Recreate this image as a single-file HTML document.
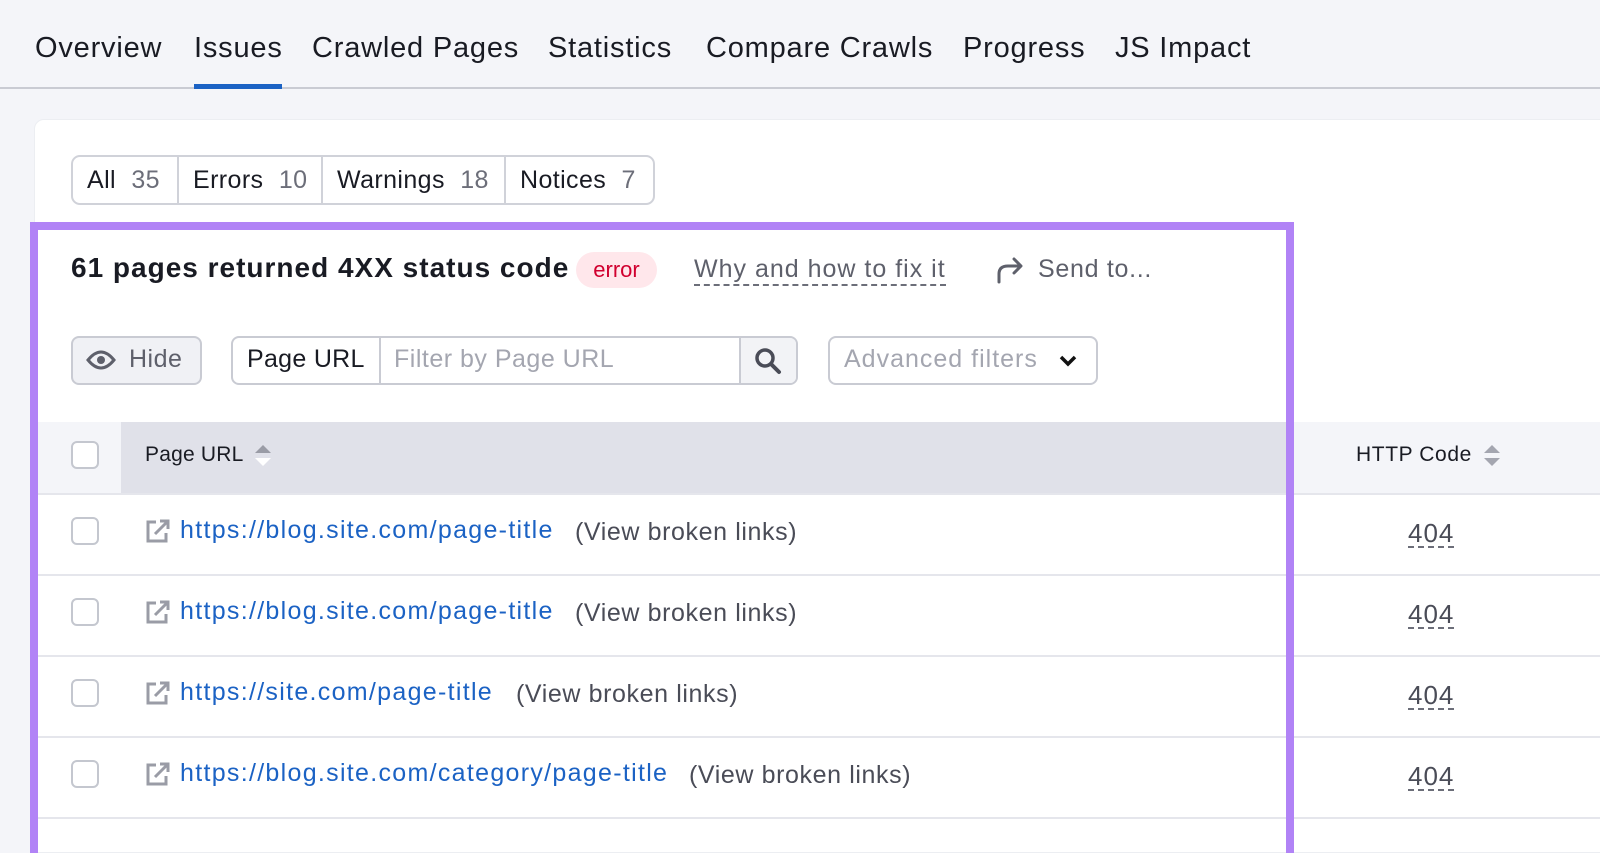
<!DOCTYPE html>
<html><head><meta charset="utf-8"><style>
*{box-sizing:border-box;margin:0;padding:0}
html,body{width:1600px;height:853px;overflow:hidden}
body{background:#f4f5f9;font-family:"Liberation Sans",Arial,sans-serif;color:#191b23;position:relative}
.a{position:absolute;white-space:nowrap}
.nav{top:32px;font-size:29px;letter-spacing:0.8px;color:#191b23}
.cb{position:absolute;left:71px;width:28px;height:28px;border:2px solid #c4c7cf;border-radius:6px;background:#fff}
.link{font-size:25px;letter-spacing:1.3px;color:#1b62c4}
.vb{font-size:25px;letter-spacing:0.6px;color:#4a4c57}
.code{font-size:26px;letter-spacing:1px;color:#4a4c57;border-bottom:2px dashed #6c6e79;line-height:26px}
.sep{position:absolute;left:38px;width:1562px;height:2px;background:#e5e6ec}
</style></head><body>
<div class="a nav" style="left:35px">Overview</div>
<div class="a nav" style="left:194px">Issues</div>
<div class="a nav" style="left:312px">Crawled Pages</div>
<div class="a nav" style="left:548px">Statistics</div>
<div class="a nav" style="left:706px">Compare Crawls</div>
<div class="a nav" style="left:963px">Progress</div>
<div class="a nav" style="left:1115px">JS Impact</div>
<div class="a" style="left:0;top:87px;width:1600px;height:2px;background:#c9cbd3"></div>
<div class="a" style="left:194px;top:84px;width:88px;height:5px;background:#1b62c4"></div>

<div class="a" style="left:34px;top:119px;width:1580px;height:734px;background:#fff;border-radius:10px 0 0 0;border:1px solid #eceef2"></div>

<div class="a" style="left:71px;top:155px;width:584px;height:50px;border:2px solid #d0d2d9;border-radius:9px;font-size:25px;letter-spacing:0.4px;line-height:46px">
 <span class="a" style="left:14px;top:0">All <span style="color:#6c6e79;margin-left:8px">35</span></span>
 <span class="a" style="left:104px;top:0;width:2px;height:46px;background:#d0d2d9"></span>
 <span class="a" style="left:120px;top:0">Errors <span style="color:#6c6e79;margin-left:8px">10</span></span>
 <span class="a" style="left:248px;top:0;width:2px;height:46px;background:#d0d2d9"></span>
 <span class="a" style="left:264px;top:0">Warnings <span style="color:#6c6e79;margin-left:8px">18</span></span>
 <span class="a" style="left:431px;top:0;width:2px;height:46px;background:#d0d2d9"></span>
 <span class="a" style="left:447px;top:0">Notices <span style="color:#6c6e79;margin-left:8px">7</span></span>
</div>

<div class="a" style="left:71px;top:252px;font-size:28px;font-weight:bold;letter-spacing:1px">61 pages returned 4XX status code</div>
<div class="a" style="left:576px;top:252px;width:81px;height:36px;border-radius:18px;background:#ffe7eb;color:#d1002f;font-size:22px;line-height:36px;text-align:center">error</div>
<div class="a" style="left:694px;top:254px;font-size:25px;letter-spacing:1px;color:#5e606b;border-bottom:2px dashed #6c6e79;line-height:30px">Why and how to fix it</div>
<svg class="a" style="left:995px;top:256px" width="30" height="28" viewBox="0 0 30 28"><path d="M4 26 V18 Q4 10 13 10 H25 M19 3 L26 10 L19 17" fill="none" stroke="#5e606b" stroke-width="3" stroke-linecap="round" stroke-linejoin="round"/></svg>
<div class="a" style="left:1038px;top:254px;font-size:25px;letter-spacing:0.7px;color:#5e606b;line-height:30px">Send to...</div>

<div class="a" style="left:71px;top:336px;width:131px;height:49px;border:2px solid #c9cbd3;border-radius:8px;background:#f0f1f5"></div>
<svg class="a" style="left:86px;top:348px" width="30" height="24" viewBox="0 0 30 24"><path d="M2 12 Q15 -4 28 12 Q15 28 2 12 Z" fill="none" stroke="#5e606b" stroke-width="3"/><circle cx="15" cy="12" r="4" fill="#5e606b"/></svg>
<div class="a" style="left:129px;top:345px;font-size:25px;letter-spacing:0.5px;color:#5e606b">Hide</div>

<div class="a" style="left:231px;top:336px;width:567px;height:49px;border:2px solid #c9cbd3;border-radius:8px;overflow:hidden">
 <div class="a" style="left:146px;top:0;width:2px;height:45px;background:#c9cbd3"></div>
 <div class="a" style="left:506px;top:0;width:61px;height:45px;background:#f2f3f6;border-left:2px solid #c9cbd3"></div>
</div>
<div class="a" style="left:247px;top:345px;font-size:25px;letter-spacing:0.3px">Page URL</div>
<div class="a" style="left:394px;top:345px;font-size:25px;letter-spacing:0.5px;color:#a4a6b0">Filter by Page URL</div>
<svg class="a" style="left:753px;top:346px" width="30" height="30" viewBox="0 0 30 30"><circle cx="12" cy="12" r="8" fill="none" stroke="#4a4c57" stroke-width="3.5"/><path d="M18 18 L26 26" stroke="#4a4c57" stroke-width="4" stroke-linecap="round"/></svg>
<div class="a" style="left:828px;top:336px;width:270px;height:49px;border:2px solid #c9cbd3;border-radius:8px"></div>
<div class="a" style="left:844px;top:345px;font-size:25px;letter-spacing:1px;color:#a4a6b0">Advanced filters</div>
<svg class="a" style="left:1058px;top:354px" width="20" height="14" viewBox="0 0 20 14"><path d="M3 3 L10 10 L17 3" fill="none" stroke="#111" stroke-width="3.5"/></svg>

<div class="a" style="left:38px;top:422px;width:83px;height:72px;background:#f4f5f9"></div>
<div class="a" style="left:121px;top:422px;width:1170px;height:72px;background:#e0e1e9"></div>
<div class="a" style="left:1290px;top:422px;width:310px;height:72px;background:#f4f5f9"></div>
<div class="sep" style="top:493px"></div>
<div class="cb" style="top:441px"></div>
<div class="a" style="left:145px;top:443px;font-size:21px;letter-spacing:0.2px">Page URL</div>
<svg class="a" style="left:253px;top:443px" width="20" height="26" viewBox="0 0 20 26"><path d="M2 10 L10 2 L18 10Z" fill="#9a9ca6"/><path d="M2 15 L10 23 L18 15Z" fill="#fff"/></svg>
<div class="a" style="left:1356px;top:443px;font-size:21px;letter-spacing:0.6px">HTTP Code</div>
<svg class="a" style="left:1482px;top:443px" width="20" height="26" viewBox="0 0 20 26"><path d="M2 10 L10 2 L18 10Z" fill="#a4a6b0"/><path d="M2 15 L10 23 L18 15Z" fill="#a4a6b0"/></svg>

<div class="cb" style="top:517px"></div>
<svg class="a" style="left:145px;top:518px" width="26" height="26" viewBox="0 0 26 26"><path d="M11 4 H3 V23 H21 V15" fill="none" stroke="#9a9ca6" stroke-width="3"/><path d="M10 16 L23 3 M15 3 H23 V11" fill="none" stroke="#9a9ca6" stroke-width="3"/></svg>
<div class="a link" style="left:180px;top:516px">https://blog.site.com/page-title</div>
<div class="a vb" style="left:575px;top:518px">(View broken links)</div>
<div class="a code" style="left:1408px;top:520px">404</div>
<div class="sep" style="top:574px"></div>

<div class="cb" style="top:598px"></div>
<svg class="a" style="left:145px;top:599px" width="26" height="26" viewBox="0 0 26 26"><path d="M11 4 H3 V23 H21 V15" fill="none" stroke="#9a9ca6" stroke-width="3"/><path d="M10 16 L23 3 M15 3 H23 V11" fill="none" stroke="#9a9ca6" stroke-width="3"/></svg>
<div class="a link" style="left:180px;top:597px">https://blog.site.com/page-title</div>
<div class="a vb" style="left:575px;top:599px">(View broken links)</div>
<div class="a code" style="left:1408px;top:601px">404</div>
<div class="sep" style="top:655px"></div>

<div class="cb" style="top:679px"></div>
<svg class="a" style="left:145px;top:680px" width="26" height="26" viewBox="0 0 26 26"><path d="M11 4 H3 V23 H21 V15" fill="none" stroke="#9a9ca6" stroke-width="3"/><path d="M10 16 L23 3 M15 3 H23 V11" fill="none" stroke="#9a9ca6" stroke-width="3"/></svg>
<div class="a link" style="left:180px;top:678px">https://site.com/page-title</div>
<div class="a vb" style="left:516px;top:680px">(View broken links)</div>
<div class="a code" style="left:1408px;top:682px">404</div>
<div class="sep" style="top:736px"></div>

<div class="cb" style="top:760px"></div>
<svg class="a" style="left:145px;top:761px" width="26" height="26" viewBox="0 0 26 26"><path d="M11 4 H3 V23 H21 V15" fill="none" stroke="#9a9ca6" stroke-width="3"/><path d="M10 16 L23 3 M15 3 H23 V11" fill="none" stroke="#9a9ca6" stroke-width="3"/></svg>
<div class="a link" style="left:180px;top:759px">https://blog.site.com/category/page-title</div>
<div class="a vb" style="left:689px;top:761px">(View broken links)</div>
<div class="a code" style="left:1408px;top:763px">404</div>
<div class="sep" style="top:817px"></div>

<div class="a" style="left:30px;top:222px;width:1264px;height:660px;border:8px solid #b183f6"></div>
</body></html>
